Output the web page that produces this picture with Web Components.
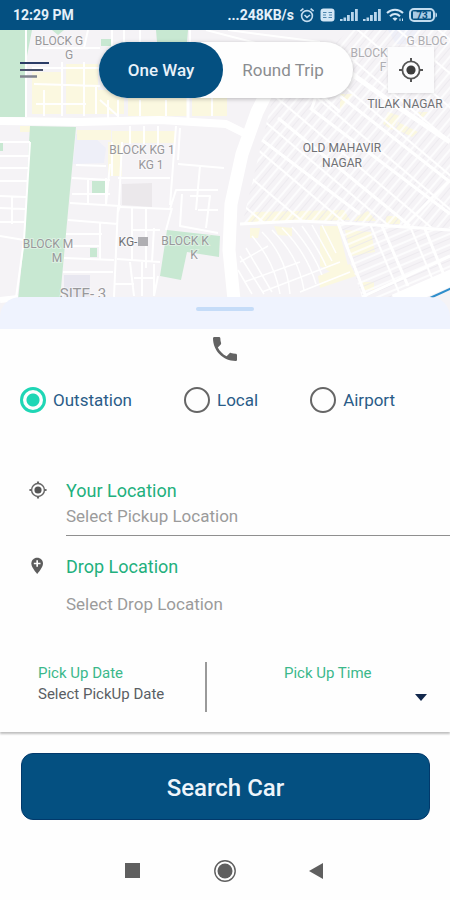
<!DOCTYPE html>
<html lang="en">
<head>
<meta charset="UTF-8">
<meta name="viewport" content="width=device-width, initial-scale=1.0">
<title>Search Car</title>
<style>
    body {
        margin: 0;
        background: #fefefe;
        font-family: Roboto, "Liberation Sans", sans-serif;
    }
</style>
</head>
<body>
<cab-app></cab-app>

<script>
    class StatusBar extends HTMLElement {
        constructor() {
            super();
            this.attachShadow({ mode: 'open' });
        }

        connectedCallback() {
            this.shadowRoot.innerHTML = `
                <style>
                    :host {
                        display: flex;
                        justify-content: space-between;
                        align-items: center;
                        height: 30px;
                        padding: 0 12px 0 13px;
                        background: #045081;
                        color: #e4f0fa;
                        font-size: 14px;
                        font-weight: 700;
                    }
                    .right {
                        display: flex;
                        align-items: center;
                        gap: 5px;
                    }
                    svg { display: block; }
                </style>
                <span>12:29 PM</span>
                <span class="right">
                    <span>...248KB/s</span>
                    <svg width="16" height="16" viewBox="0 0 16 16" fill="none" stroke="#c3dcef" stroke-width="1.6">
                        <circle cx="8" cy="9" r="5.4"/>
                        <path d="M5.5 8 8 10.4 11 8M1.4 4.2 4.4 1.6M14.6 4.2 11.6 1.6"/>
                    </svg>
                    <svg width="15" height="14" viewBox="0 0 15 14">
                        <rect x=".5" y=".5" width="14" height="13" rx="3" fill="#d3e6f5"/>
                        <path d="M3 4.5h3.500M8.500 4.500h3.500M3 9.500h3.500M8.500 9.500h3.500M3 7h3M9 7h3" stroke="#4f86ad" stroke-width="1.2"/>
                    </svg>
                    <svg width="18" height="14" viewBox="0 0 18 14" fill="#b9d6ec">
                        <path d="M0 11h2.600v2H0zM3.500 9.500h2.600V13H3.500zM7 7h2.800v6H7zM11 4h2.800v9H11zM15 1h2.800v12H15z"/>
                    </svg>
                    <svg width="18" height="14" viewBox="0 0 18 14" fill="#b9d6ec">
                        <path d="M0 11h2.600v2H0zM3.500 9.500h2.600V13H3.500zM7 7h2.800v6H7zM11 4h2.800v9H11zM15 1h2.800v12H15z"/>
                    </svg>
                    <svg width="18" height="14" viewBox="0 0 18 14" fill="none" stroke="#d3e6f5" stroke-width="2">
                        <path d="M1 5c4.500-4.500 11.500-4.500 16 0M4 8.200c3-2.800 7-2.800 10 0"/>
                        <path d="M6.500 10.500c1.500-1.300 3.500-1.300 5 0L9 13z" fill="#d3e6f5" stroke="none"/>
                        <path d="M14 10.500v2.500M16.500 10.500v2.500" stroke-width="1"/>
                    </svg>
                    <svg width="29" height="14" viewBox="0 0 29 14">
                        <rect x="1" y="1" width="24" height="12" rx="4" fill="none" stroke="#c3dcef" stroke-width="2"/>
                        <path d="M26.500 4.500c2 0 2 5 0 5z" fill="#c3dcef"/>
                        <rect x="4" y="3.500" width="18" height="7" fill="#a9cbe5"/>
                        <text x="13" y="10.500" text-anchor="middle" font-size="10" font-weight="700" fill="#045081">73</text>
                    </svg>
                </span>
            `;
        }
    }
    customElements.define('status-bar', StatusBar);

    class AreaMap extends HTMLElement {
        constructor() {
            super();
            this.attachShadow({ mode: 'open' });
        }

        connectedCallback() {
            this.shadowRoot.innerHTML = `
                <style>
                    :host { display: block; }
                    svg { display: block; width: 100%; height: auto; }
                    .park { fill: #c8e8d2; }
                    .sand { fill: #fbf8e0; }
                    .road { fill: none; stroke: #fff; stroke-linejoin: round; }
                    .name { fill: #98989b; font-size: 12px; text-anchor: middle; stroke: #fff; stroke-width: 2px; stroke-opacity: .4; paint-order: stroke; }
                    .dark { fill: #707175; }
                    .faint { fill: #aeadb2; }
                    .large { font-size: 15px; }
                </style>
                <svg viewBox="0 30 450 288" role="img" aria-label="Map">
                    <defs>
                        <pattern id="steep" width="10" height="26" patternUnits="userSpaceOnUse" patternTransform="rotate(40)">
                            <path d="M1 0v26" stroke="#fff" stroke-width="1.5"/>
                            <path d="M5.5 0v26" stroke="#ebe9ee" stroke-width=".8"/>
                            <path d="M0 1h10" stroke="#fff" stroke-width="2"/>
                        </pattern>
                        <pattern id="flat" width="36" height="10" patternUnits="userSpaceOnUse" patternTransform="rotate(-23)">
                            <path d="M0 1h36" stroke="#fff" stroke-width="1.5"/>
                            <path d="M0 5.5h36" stroke="#ebe9ee" stroke-width=".8"/>
                            <path d="M1 0v10" stroke="#fff" stroke-width="2"/>
                        </pattern>
                    </defs>
                    <path fill="#f5f3f6" d="M0 30h450v288H0z"/>
                    <path fill="#eeeff8" d="M76 134 95 138 106 148 104 163 73 164zM388 30h30l-10 14h-12z"/>

                    <!-- sandy blocks -->
                    <g class="sand">
                        <path d="M32 72h30v42H32zM66 64h32v50H66zM84 90h40v24H84zM128 96h60v20h-60zM192 98h35v18h-35z"/>
                        <path d="M20 126h12v6H20zM77 130h34v10H77zM112 131h64v12h-64zM108 142h14v34h-14z"/>
                        <path d="M388 112l12 4-8 14-9-6zM398 122l20 10-6 5-16-8zM340 94h14l-14 16zM418 112h10l-6 6z"/>
                        <path d="M252 212 344 210 350 220 248 222zM358 216l10-5 8 10h-22zM386 216h14v8h-14z"/>
                        <path d="M250 228h10l-2 10h-8zM274 226l18 2v8l-14-1zM320 226l18 0 10 40-14 8-14-8zM345 230l26 2 4 20-24 4zM318 276l32-12 6 12-36 12zM362 282h12v8h-10z"/>
                    </g>

                    <!-- right side streets -->
                    <path fill="url(#steep)" d="M272 100 350 30h100v198l-150-6-58 3z"/>
                    <path fill="url(#flat)" d="M338 223 450 230v48l-60 19h-28z"/>
                    <g class="road" stroke-width="1.5">
                        <path d="M262 232c16 16 26 36 28 62M272 230c18 18 28 36 32 60M282 228c16 16 28 36 34 56M292 227c14 16 24 32 30 48M302 226c10 14 18 26 24 40M312 225l20 36M322 225l14 28"/>
                        <path d="M252 236c14 16 24 34 28 58M240 256l24 38M246 248l26 44M238 270l14 24M240 262l28-16M244 282 300 262M262 292 340 262M300 292 350 272"/>
                    </g>
                    <g class="road" stroke-width="3">
                        <path stroke-width="13" d="M278 70 257 112 242 154 231 204 229 250 234 300"/>
                        <path stroke-width="5" d="M352 74 395 105 450 142"/>
                        <path d="M240 224 300 221 360 224 450 230M340 96 450 182M310 108 450 214M278 118 410 226M262 140 360 214"/>
                        <path d="M338 223 366 297M382 226 408 286M425 229 446 280M362 297 450 256"/>
                        <path d="M286 54 320 84 312 108M300 76 340 112M450 180 404 226"/>
                        <path stroke-width="16" d="M395 302 455 276"/>
                    </g>

                    <!-- parks -->
                    <g class="park">
                        <path d="M0 30h32l-5 26-1 61H0zM52 30h12l-6 5zM156 30h32l-2 24h-28zM101 39h10v7h-10z"/>
                        <path d="M30 126 76 127 70 190 62 277 60 300H18L25 232 28 160z"/>
                        <path d="M92 181h13v13H92zM90 248h7v9h-7zM0 143h3v8H0z"/>
                        <path d="M167 230 220 236 219 257 187 252 181 280 160 276z"/>
                    </g>
                    <path fill="#ebe8eb" d="M122 184 152 183 152 207 122 205z"/>
                    <path fill="#e8e7f0" d="M64 275h26v24H64z"/>

                    <!-- left side streets -->
                    <g class="road" stroke-width="2">
                        <path d="M26 30 26 117M40 48h60M32 68h68M34 84 100 86M44 90v26M62 62v54M84 62v54M96 86v28M36 104h50M100 100 118 116M108 100v18M118 100v18M140 100v16M166 100v16M188 98v18M212 98v18"/>
                        <path d="M112 30v20M124 30v14M140 30v14M84 48l4-18M190 30v14M206 30 260 44M228 30 320 42"/>
                        <path d="M0 142h30M0 156h29M0 168h28M0 181h27M0 196 26 197M0 208 25 209M12 196v28M0 222h25M0 236 24 240M30 142 24 240 16 298"/>
                        <path d="M76 165 106 166M72 178 110 180M72 194h38M70 203 120 206 118 212M68 220 118 224M66 234h36M65 246h36M64 258 114 260M63 272h50M88 178v26M106 178v27M100 222v37M110 164 106 205M118 206 114 297M112 142v34M122 142 119 205"/>
                        <path d="M176 126 170 205M118 178h52M120 207 170 209 176 190 218 190M130 126v18M144 126v18M158 126v20M180 128 178 160M178 164 224 168M200 166 196 210M172 208l-6 22M182 194 180 226 218 233M190 196h20l-4 32M198 210h20"/>
                        <path d="M117 259 160 262M132 208v52M146 208v60M154 228 152 262M132 230h28M130 262l4 34M142 262v34M154 264v32M134 278h20M114 284h20M158 276l-4 20"/>
                    </g>
                    <g class="road">
                        <path stroke-width="8" d="M0 121 80 122 160 120 226 124 246 134"/>
                        <path stroke-width="3" d="M188 96V118"/>
                        <path stroke-width="6" d="M0 300 18 298"/>
                    </g>
                    <path stroke="#2f8ecb" stroke-width="2" d="M430 298 452 288"/>

                    <!-- place names -->
                    <text class="name" x="59" y="45">BLOCK G</text>
                    <text class="name" x="69" y="59">G</text>
                    <text class="name" x="142" y="154">BLOCK KG 1</text>
                    <text class="name" x="151" y="169">KG 1</text>
                    <text class="name" x="48" y="248">BLOCK M</text>
                    <text class="name" x="57" y="262">M</text>
                    <text class="name dark" x="128" y="246">KG-</text>
                    <path fill="#b0afb3" d="M138 237h10v9h-10z"/>
                    <text class="name" x="185" y="245">BLOCK K</text>
                    <text class="name" x="194" y="259">K</text>
                    <text class="name large" x="83" y="299">SITE- 3</text>
                    <text class="name dark" x="342" y="152">OLD MAHAVIR</text>
                    <text class="name dark" x="342" y="167">NAGAR</text>
                    <text class="name dark" x="405" y="108">TILAK NAGAR</text>
                    <text class="name faint" x="369" y="57">BLOCK</text>
                    <text class="name faint" x="383" y="71">F</text>
                    <text class="name faint" x="427" y="45">G BLOC</text>
                </svg>
            `;
        }
    }
    customElements.define('area-map', AreaMap);

    class MapControls extends HTMLElement {
        constructor() {
            super();
            this.attachShadow({ mode: 'open' });
        }

        connectedCallback() {
            this.shadowRoot.innerHTML = `
                <style>
                    :host {
                        display: flex;
                        justify-content: space-between;
                        align-items: center;
                        height: 56px;
                        padding: 12px 16px 0;
                    }
                    button {
                        margin: 0;
                        padding: 0;
                        border: 0;
                        background: none;
                        font: inherit;
                        cursor: pointer;
                    }
                    svg { display: block; }
                    .menu { padding: 4px; }
                    .trip {
                        display: flex;
                        height: 56px;
                        margin-left: 10px;
                        border-radius: 28px;
                        background: #fefefe;
                        box-shadow: 0 1px 4px rgb(0 0 0 / 0.25);
                    }
                    .trip button {
                        width: 124px;
                        border-radius: 28px;
                        font-size: 17px;
                        color: #8b8d90;
                    }
                    .trip button:last-child { width: 130px; padding-right: 10px; }
                    .trip .active {
                        background: #045081;
                        color: #e9f2fa;
                        font-weight: 500;
                    }
                    .locate {
                        padding: 9px;
                        background: #fcfcfd;
                        box-shadow: 0 1px 3px rgb(0 0 0 / 0.12);
                    }
                </style>
                <button class="menu" aria-label="Menu">
                    <svg width="30" height="18" viewBox="0 0 30 18">
                        <path d="M0 2h29" stroke="#2b3c66" stroke-width="2"/>
                        <path d="M0 9h23" stroke="#4a536c" stroke-width="2"/>
                        <path d="M0 15.500h17" stroke="#81858f" stroke-width="2.5"/>
                    </svg>
                </button>
                <div class="trip">
                    <button class="active" aria-pressed="true">One Way</button>
                    <button aria-pressed="false">Round Trip</button>
                </div>
                <button class="locate" aria-label="My location">
                    <svg width="28" height="28" viewBox="0 0 28 28">
                        <circle cx="14" cy="14" r="4.6" fill="#3c3c3c"/>
                        <circle cx="14" cy="14" r="8.6" fill="none" stroke="#555" stroke-width="1.8"/>
                        <path d="M14 2v4M14 22v4M2 14h4M22 14h4" stroke="#555" stroke-width="2"/>
                    </svg>
                </button>
            `;
            const buttons = this.shadowRoot.querySelectorAll('.trip button');
            buttons.forEach(button => button.addEventListener('click', () => {
                buttons.forEach(b => {
                    b.classList.toggle('active', b === button);
                    b.setAttribute('aria-pressed', b === button);
                });
            }));
        }
    }
    customElements.define('map-controls', MapControls);

    class TripType extends HTMLElement {
        constructor() {
            super();
            this.attachShadow({ mode: 'open' });
        }

        connectedCallback() {
            this.shadowRoot.innerHTML = `
                <style>
                    :host {
                        display: flex;
                        gap: 52px;
                        padding: 0 20px;
                        color: #2a5c88;
                        font-size: 17px;
                    }
                    label {
                        display: flex;
                        align-items: center;
                        gap: 7px;
                    }
                    input {
                        appearance: none;
                        width: 26px;
                        height: 26px;
                        margin: 0;
                        border: 2px solid #666;
                        border-radius: 50%;
                    }
                    input:checked {
                        border: 3px solid #1fd6b5;
                        background: radial-gradient(circle, #1fd6b5 6px, transparent 7px);
                    }
                </style>
                <label><input type="radio" name="trip" checked>Outstation</label>
                <label><input type="radio" name="trip">Local</label>
                <label><input type="radio" name="trip">Airport</label>
            `;
        }
    }
    customElements.define('trip-type', TripType);

    class LocationField extends HTMLElement {
        constructor() {
            super();
            this.attachShadow({ mode: 'open' });
        }

        connectedCallback() {
            this.shadowRoot.innerHTML = `
                <style>
                    :host {
                        display: flex;
                        gap: 18px;
                        padding-left: 28px;
                    }
                    .field {
                        display: flex;
                        flex-direction: column;
                        flex: 1;
                    }
                    label {
                        color: #22b07d;
                        font-size: 18px;
                        line-height: 22px;
                    }
                    input {
                        width: 100%;
                        height: 34px;
                        box-sizing: border-box;
                        margin: 0;
                        padding: 0 0 6px;
                        border: 0;
                        outline: none;
                        background: none;
                        font: inherit;
                        font-size: 17px;
                        color: #333;
                    }
                    input::placeholder { color: #9b9b9b; opacity: 1; }
                    :host([underlined]) input { border-bottom: 1px solid #8f8f8f; }
                    :host([spaced]) label { margin-bottom: 12px; }
                </style>
                <slot name="icon"></slot>
                <div class="field">
                    <label for="place">${this.getAttribute('label')}</label>
                    <input id="place" type="text" placeholder="${this.getAttribute('placeholder')}">
                </div>
            `;
        }
    }
    customElements.define('location-field', LocationField);

    class PickupCard extends HTMLElement {
        constructor() {
            super();
            this.attachShadow({ mode: 'open' });
        }

        connectedCallback() {
            this.shadowRoot.innerHTML = `
                <style>
                    :host {
                        display: flex;
                        align-items: center;
                        height: 90px;
                        box-shadow: 0 2px 2px rgb(0 0 0 / 0.25);
                        background: #fefefe;
                    }
                    .date, .time {
                        display: flex;
                        flex-direction: column;
                        height: 50px;
                        box-sizing: border-box;
                    }
                    .date {
                        flex: 0 0 46%;
                        padding-left: 38px;
                        border-right: 2px solid #9a9a9a;
                    }
                    .time {
                        position: relative;
                        flex: 1;
                        padding: 0 20px 0 77px;
                    }
                    label {
                        color: #3bb88b;
                        font-size: 15px;
                        line-height: 22px;
                    }
                    input, select {
                        width: 100%;
                        height: 20px;
                        margin: 0;
                        padding: 0;
                        border: 0;
                        outline: none;
                        background: none;
                        font: inherit;
                        font-size: 15px;
                        color: #5a5e64;
                    }
                    input::placeholder { color: #5a5e64; opacity: 1; }
                    select { appearance: none; }
                    svg {
                        position: absolute;
                        right: 23px;
                        bottom: 11px;
                        pointer-events: none;
                    }
                </style>
                <div class="date">
                    <label for="date">Pick Up Date</label>
                    <input id="date" type="text" placeholder="Select PickUp Date">
                </div>
                <div class="time">
                    <label for="time">Pick Up Time</label>
                    <select id="time"><option></option></select>
                    <svg width="12" height="7" viewBox="0 0 12 7"><path d="M0 0h12L6 7z" fill="#12284c"/></svg>
                </div>
            `;
        }
    }
    customElements.define('pickup-card', PickupCard);

    class NavBar extends HTMLElement {
        constructor() {
            super();
            this.attachShadow({ mode: 'open' });
        }

        connectedCallback() {
            this.shadowRoot.innerHTML = `
                <style>
                    :host {
                        display: flex;
                        justify-content: center;
                        gap: 60px;
                    }
                    button {
                        width: 32px;
                        height: 32px;
                        padding: 4px;
                        border: 0;
                        background: none;
                    }
                    svg { display: block; }
                </style>
                <button aria-label="Recent apps">
                    <svg width="24" height="24" viewBox="0 0 24 24"><path d="M4 4h15v15H4z" fill="#5f5f5f"/></svg>
                </button>
                <button aria-label="Home">
                    <svg width="24" height="24" viewBox="0 0 24 24">
                        <circle cx="12" cy="12" r="7.5" fill="#5f5f5f"/>
                        <circle cx="12" cy="12" r="10.2" fill="none" stroke="#5f5f5f" stroke-width="1.4"/>
                    </svg>
                </button>
                <button aria-label="Back">
                    <svg width="24" height="24" viewBox="0 0 24 24"><path d="M4 12 18 4v16z" fill="#5f5f5f"/></svg>
                </button>
            `;
        }
    }
    customElements.define('nav-bar', NavBar);

    class CabApp extends HTMLElement {
        constructor() {
            super();
            this.attachShadow({ mode: 'open' });
        }

        connectedCallback() {
            this.shadowRoot.innerHTML = `
                <style>
                    :host {
                        display: flex;
                        flex-direction: column;
                    }
                    .top { display: grid; }
                    .top > * { grid-area: 1 / 1; }
                    .top map-controls { align-self: start; z-index: 1; }
                    .handle {
                        display: flex;
                        justify-content: center;
                        height: 32px;
                        box-sizing: border-box;
                        margin-top: -21px;
                        padding-top: 10px;
                        border-radius: 20px 20px 0 0;
                        background: #eff3fe;
                        z-index: 1;
                    }
                    .handle span {
                        width: 58px;
                        height: 4px;
                        border-radius: 2px;
                        background: #c5dcf8;
                    }
                    .call {
                        align-self: center;
                        margin: 4px 0 22px;
                        padding: 0;
                        line-height: 0;
                    }
                    .fields {
                        display: flex;
                        flex-direction: column;
                        gap: 20px;
                        margin: 67px 0 18px;
                    }
                    .search {
                        height: 67px;
                        margin: 21px 20px 35px 21px;
                        padding-top: 4px;
                        border: 1px solid #02396b;
                        border-radius: 12px;
                        background: #045081;
                        color: #eef5fb;
                        font: inherit;
                        font-size: 24px;
                        font-weight: 500;
                        cursor: pointer;
                    }
                </style>
                <status-bar></status-bar>
                <div class="top">
                    <area-map></area-map>
                    <map-controls></map-controls>
                </div>
                <div class="handle"><span></span></div>
                <a class="call" href="#call" aria-label="Call">
                    <svg width="32" height="32" viewBox="0 0 24 24"><path d="M6.620 10.790c1.440 2.830 3.760 5.140 6.590 6.590l2.200-2.200c.27-.27.67-.36 1.020-.24 1.120.37 2.330.57 3.570.57.55 0 1 .45 1 1V20c0 .55-.45 1-1 1-9.390 0-17-7.610-17-17 0-.55.45-1 1-1h3.500c.55 0 1 .45 1 1 0 1.250.2 2.450.57 3.570.11.35.03.74-.25 1.020z" fill="#636363"/></svg>
                </a>
                <trip-type></trip-type>
                <div class="fields">
                    <location-field underlined label="Your Location" placeholder="Select Pickup Location">
                        <svg slot="icon" width="20" height="20" viewBox="0 0 28 28">
                            <circle cx="14" cy="14" r="5" fill="#555"/>
                            <circle cx="14" cy="14" r="9" fill="none" stroke="#666" stroke-width="2"/>
                            <path d="M14 2v3M14 23v3M2 14h3M23 14h3" stroke="#666" stroke-width="3"/>
                        </svg>
                    </location-field>
                    <location-field spaced label="Drop Location" placeholder="Select Drop Location">
                        <svg slot="icon" width="20" height="20" viewBox="0 0 24 24">
                            <path d="M11 2C6.900 2 4 5.100 4 9c0 5 7 12.500 7 12.500S18 14 18 9c0-3.900-2.900-7-7-7z" fill="#5d5d5d"/>
                            <path d="M11 5v8M7 9h8" stroke="#fff" stroke-width="2"/>
                        </svg>
                    </location-field>
                </div>
                <pickup-card></pickup-card>
                <button class="search">Search Car</button>
                <nav-bar></nav-bar>
            `;
        }
    }
    customElements.define('cab-app', CabApp);
</script>
</body>
</html>
